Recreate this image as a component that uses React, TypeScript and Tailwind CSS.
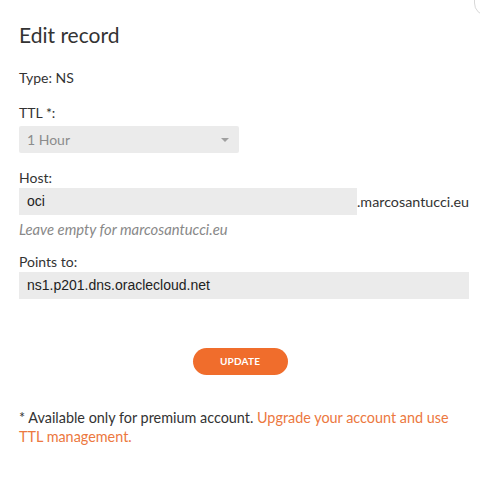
export default function App() {
  const label = "text-[14px] leading-[17px] text-[#333]";
  return (
    <div className="relative w-[480px] h-[484px] bg-white overflow-hidden font-['Lato',sans-serif] text-[#333]">
      <div className="absolute right-[-20px] top-[-30px] w-[26px] h-[46px] rounded-full border border-[#d8d8d8]" />
      <div className="px-[19px] pt-[22px]">
        <h1 className="text-[21px] leading-[26px] text-[#333] font-normal">Edit record</h1>
        <div className={`${label} mt-[21px]`}>Type: NS</div>
        <div className={`${label} mt-[18px]`}>TTL *:</div>
        <div className="mt-[5px] w-[220px] h-[27px] bg-[#ebebeb] rounded-[2px] flex items-center justify-between pl-[8px] pr-[10px]">
          <span className="text-[14px] text-[#8c8c8c]">1 Hour</span>
          <span className="w-0 h-0 border-l-[4px] border-r-[4px] border-t-[4px] border-l-transparent border-r-transparent border-t-[#a0a0a0]" />
        </div>
        <div className={`${label} mt-[16px]`}>Host:</div>
        <div className="mt-[2px] flex items-center">
          <div className="w-[338px] shrink-0 h-[27px] bg-[#ebebeb] flex items-center pl-[8px] text-[14px] font-['Liberation_Sans',sans-serif] text-[#222]">oci</div>
          <span className="shrink-0 whitespace-nowrap text-[14.3px] text-[#333]">.marcosantucci.eu</span>
        </div>
        <div className="mt-[6px] text-[14.8px] leading-[17px] italic text-[#888]">Leave empty for marcosantucci.eu</div>
        <div className={`${label} mt-[15px]`}>Points to:</div>
        <div className="mt-[2px] w-[450px] h-[27px] bg-[#ebebeb] flex items-center pl-[8px] text-[14px] font-['Liberation_Sans',sans-serif] text-[#222]">ns1.p201.dns.oraclecloud.net</div>
        <div className="mt-[49px] flex justify-center">
          <button className="w-[95px] h-[27px] rounded-full bg-[#f06d2c] text-white text-[10px] font-bold tracking-[0.2px]">UPDATE</button>
        </div>
        <div className="mt-[33px] text-[14.4px] leading-[19px] text-[#333]">
          <div>
            * Available only for premium account. <span className="text-[#ec7840]">Upgrade your account and use</span>
          </div>
          <div className="text-[#ec7840]">TTL management.</div>
        </div>
      </div>
    </div>
  );
}
